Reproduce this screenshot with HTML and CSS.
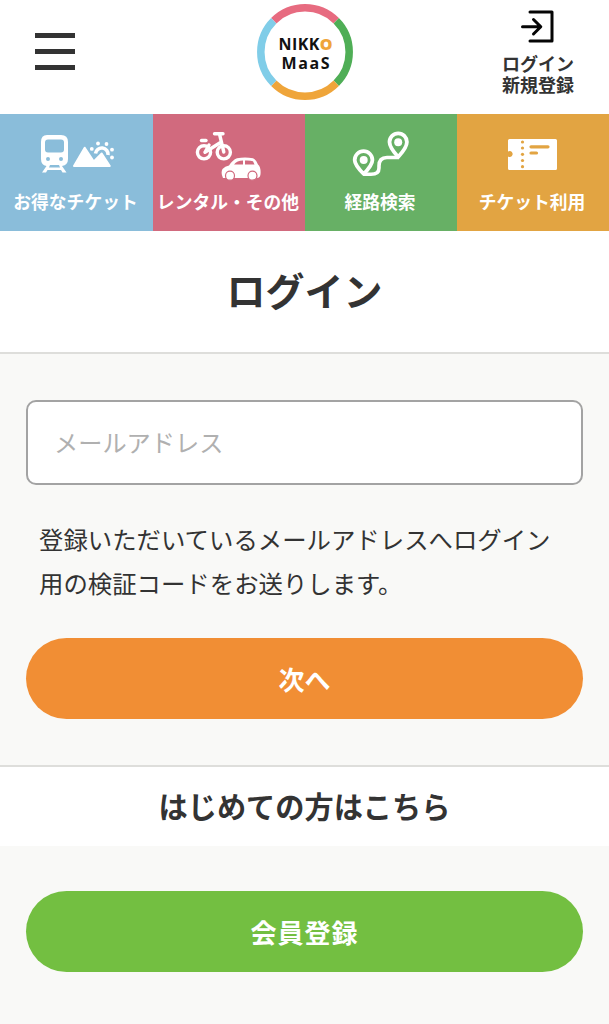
FILE: index.html
```html
<!DOCTYPE html>
<html lang="ja">
<head>
<meta charset="utf-8">
<title>ログイン | NIKKO MaaS</title>
<link rel="stylesheet" href="styles.css">
</head>
<body>
<header class="header">
  <button class="menu" aria-label="メニュー"><span class="menu-line"></span><span class="menu-line"></span><span class="menu-line"></span></button>
  <svg class="logo" viewBox="0 0 96 96" role="img">
    <g fill="none" stroke-width="7.5">
      <path stroke="#e76b80" d="M16.750 16.750A44.2 44.2 0 0 1 79.250 16.750"/>
      <path stroke="#4fae56" d="M79.250 16.750A44.2 44.2 0 0 1 79.250 79.250"/>
      <path stroke="#efa53a" d="M79.250 79.250A44.2 44.2 0 0 1 16.750 79.250"/>
      <path stroke="#80cde8" d="M16.750 79.250A44.2 44.2 0 0 1 16.750 16.750"/>
    </g>
    <text class="logo-text" x="21.500" y="45.5" textLength="54" lengthAdjust="spacing">NIKK<tspan class="logo-o">O</tspan></text>
    <text class="logo-text" x="24.500" y="64.5" textLength="48" lengthAdjust="spacing">MaaS</text>
  </svg>
  <a class="account">
    <svg class="account-icon" viewBox="0 0 34 34"><path d="M9 2H31V31H9M1.5 16.8H19M12.5 9.5L19.8 16.8L12.5 24" fill="none" stroke="#050505" stroke-width="3" stroke-linecap="round" stroke-linejoin="round"/></svg>
    <span>ログイン<br>新規登録</span>
  </a>
</header>
<nav class="nav">
  <a class="tab tab-ticket">
    <svg class="tab-icon" viewBox="0 0 152 60">
      <path fill="#fff" fill-rule="evenodd" d="M46 21H60Q67 21 67 28V45Q67 51 61 52L65.5 58.5H61.500L60 56H46.500L45 58.500H41L45.500 52Q40 51 40 45V28Q40 21 46 21ZM47 25.500Q44 25.500 44 28.500V35.500Q44 38.500 47 38.500H60Q63 38.500 63 35.500V28.500Q63 25.500 60 25.500ZM47 43A2 2 0 1 0 47 47A2 2 0 1 0 47 43ZM60 43A2 2 0 1 0 60 47A2 2 0 1 0 60 43ZM49 51L48 53.500H59L58 51Z"/>
      <path fill="none" stroke="#fff" stroke-width="3.600" d="M94.500 39.500A6.200 6.200 0 1 1 107 41"/>
      <path fill="#fff" stroke="#fff" stroke-width="2" stroke-linejoin="round" d="M73 52L83.700 33.700L92.800 47.500L100.700 39.500L108.800 52Z"/>
      <g fill="#fff"><circle cx="90.800" cy="34.900" r="1.900"/><circle cx="97" cy="29.500" r="1.900"/><circle cx="105.500" cy="30" r="1.900"/><circle cx="111" cy="35.700" r="1.900"/><circle cx="111" cy="43.500" r="1.900"/></g>
    </svg>
    <span>お得なチケット</span>
  </a>
  <a class="tab tab-rental">
    <svg class="tab-icon" viewBox="0 0 152 60">
      <g fill="none" stroke="#fff" stroke-width="3.400" stroke-linecap="round" stroke-linejoin="round">
        <circle cx="51" cy="38.300" r="6.600"/><circle cx="70.800" cy="38.300" r="6.600"/>
        <path d="M70.800 38L66.500 20M61.500 19.800H70M52 38.300L67.500 28.500M52 38.300L56 31"/>
        <path d="M48.500 26.500H53"/>
      </g>
      <path fill="#fff" d="M70 64Q67.500 59 69.500 55Q72 52.200 76 51.500Q79.500 46 84 44.300Q92 42.500 100 44.300Q103 45.500 105 50.500Q107.800 53 107.600 59Q107.600 63.500 104.500 64Z"/>
      <path fill="#d16a7e" d="M81 50.500Q84 46.700 90 46.500V50.500ZM92 46.500Q97.500 46.300 100 47.200L101.500 50.500H92Z"/>
      <g fill="#fff" stroke="#d16a7e" stroke-width="1.200"><circle cx="77" cy="61.700" r="4.500"/><circle cx="99.500" cy="61.700" r="4.500"/></g>
    </svg>
    <span>レンタル・その他</span>
  </a>
  <a class="tab tab-route">
    <svg class="tab-icon" viewBox="0 0 152 60">
      <g fill="none" stroke="#fff" stroke-linejoin="round">
        <path d="M58.500 60.300H66Q74 60.300 74 54V52Q74 43.500 82 43.500H94" stroke-width="3.600"/>
        <g stroke-width="3.800"><path d="M58.700 60Q49.700 51 49.700 46A8.700 8.700 0 0 1 67.400 46Q67.400 51 58.700 60Z"/><path d="M93.200 43Q84.500 33.500 84.500 28A8.700 8.700 0 0 1 101.900 28Q101.900 33.500 93.200 43Z"/></g>
      </g>
      <g fill="#fff"><circle cx="58.700" cy="46" r="4"/><circle cx="93.200" cy="28.300" r="4"/></g>
    </svg>
    <span>経路検索</span>
  </a>
  <a class="tab tab-use">
    <svg class="tab-icon" viewBox="0 0 152 60">
      <path fill="#fff" d="M52.500 25H98.500Q100 25 100 26.500V54.500Q100 56 98.500 56H52.500Q51 56 51 54.500V42.500A3 3 0 1 0 51 37.500V26.500Q51 25 52.500 25Z"/>
      <g fill="#e2a442"><circle cx="65.500" cy="28" r="1.600"/><circle cx="65.500" cy="34" r="1.600"/><circle cx="65.500" cy="40.300" r="1.600"/><circle cx="65.500" cy="46.500" r="1.600"/><circle cx="65.500" cy="52.700" r="1.600"/></g>
      <path d="M74 32.800H91M74 39H79.500" stroke="#e2a442" stroke-width="3.200" stroke-linecap="round"/>
    </svg>
    <span>チケット利用</span>
  </a>
</nav>
<main>
  <h1 class="title">ログイン</h1>
  <form class="form">
    <input class="email" type="email" placeholder="メールアドレス">
    <p class="note">登録いただいているメールアドレスへログイン用の検証コードをお送りします。</p>
    <button class="button next" type="button">次へ</button>
  </form>
  <h2 class="first">はじめての方はこちら</h2>
  <section class="signup"><button class="button register" type="button">会員登録</button></section>
</main>
</body>
</html>
```
FILE: styles.css
```css
* { box-sizing: border-box; }
body { margin: 0; background: #f9f9f7; color: #333; font-family: "Noto Sans CJK JP", sans-serif; }
button { border: 0; padding: 0; background: none; font-family: inherit; }
.header { height: 114px; display: grid; grid-template-columns: 1fr 96px 1fr; background: #fff; }
.menu { justify-self: start; align-self: start; margin: 33px 0 0 35px; display: flex; flex-direction: column; gap: 11px; }
.menu-line { width: 40px; height: 5px; background: #333; }
.logo { width: 96px; height: 96px; margin-top: 4px; overflow: visible; }
.logo-text { font: 700 16px "Open Sans", sans-serif; fill: #111; }
.logo-o { fill: #efa53a; font-weight: 800; }
.account { justify-self: end; width: 72px; margin-right: 35px; padding-top: 10px; display: flex; flex-direction: column; align-items: center; font-size: 18px; font-weight: 700; line-height: 21px; white-space: nowrap; }
.account-icon { width: 34px; height: 34px; margin-bottom: 9px; }
.nav { height: 117px; display: grid; grid-template-columns: 153px 152px 152px 152px; }
.tab { display: flex; flex-direction: column; align-items: center; color: #fff; font-size: 17.8px; font-weight: 700; line-height: 24px; white-space: nowrap; }
.tab span { padding-right: 2px; }
.tab-icon { width: 152px; height: 60px; margin-bottom: 15px; overflow: visible; }
.tab-ticket { background: #8abdda; }
.tab-rental { background: #d16a7e; }
.tab-route { background: #67b065; }
.tab-use { background: #e2a442; }
.title { height: 123px; margin: 0; border-bottom: 2px solid #dededb; background: #fff; text-align: center; font-size: 39px; line-height: 116px; font-weight: 700; }
.form { padding: 46px 26px; }
.email { display: block; width: 100%; height: 85px; padding: 0 26px 2px; border: 2px solid #a3a3a3; border-radius: 10px; background: #fff; font: 400 24.2px "Noto Sans CJK JP", sans-serif; }
.email::placeholder { color: #b0b0b0; font-weight: 400; opacity: 1; }
.note { margin: 32px 13px 34px; font-size: 24.4px; line-height: 43.5px; }
.button { display: block; width: 100%; height: 81px; border-radius: 41px; color: #fff; font-size: 26px; font-weight: 700; line-height: 79px; }
.next { background: #f18e34; }
.register { background: #73bf41; letter-spacing: 1px; }
.first { height: 81px; margin: 0; border-top: 2px solid #dededb; background: #fff; text-align: center; font-size: 29.2px; font-weight: 700; line-height: 77px; }
.signup { padding: 45px 26px; }
```
